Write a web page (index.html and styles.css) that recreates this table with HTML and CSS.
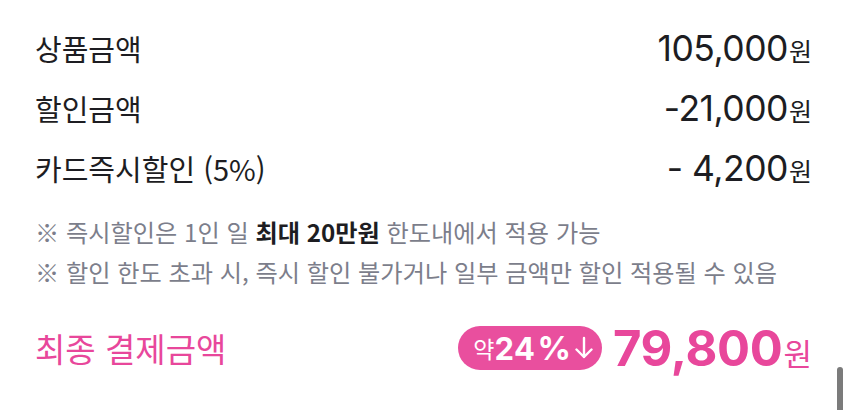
FILE: index.html
```html
<!DOCTYPE html>
<html lang="ko">
<head>
<meta charset="utf-8">
<link rel="stylesheet" href="styles.css">
</head>
<body>
<div class="summary">
  <div class="row">
    <span class="label">상품금액</span>
    <span class="amount"><span class="num">105,000</span><span class="won">원</span></span>
  </div>
  <div class="row">
    <span class="label">할인금액</span>
    <span class="amount"><span class="num">-21,000</span><span class="won">원</span></span>
  </div>
  <div class="row">
    <span class="label">카드즉시할인 (5%)</span>
    <span class="amount"><span class="num">- 4,200</span><span class="won">원</span></span>
  </div>
  <ul class="notes">
    <li>※ 즉시할인은 1인 일 <strong>최대 20만원</strong> 한도내에서 적용 가능</li>
    <li>※ 할인 한도 초과 시, 즉시 할인 불가거나 일부 금액만 할인 적용될 수 있음</li>
  </ul>
  <div class="total">
    <span class="total-label">최종 결제금액</span>
    <span class="total-right">
      <span class="badge"><span class="badge-pre">약</span><span class="badge-pct">24</span><span class="badge-sign">%</span><svg class="badge-arrow" width="18" height="24" viewBox="0 0 18 24"><path d="M9 2 V21 M1.5 13.5 L9 21 L16.5 13.5" fill="none" stroke="#ffffff" stroke-width="2.4" stroke-linecap="round" stroke-linejoin="round"/></svg></span>
      <span class="price"><span class="total-num">79,800</span><span class="total-won">원</span></span>
    </span>
  </div>
</div>
<div class="scrollbar"></div>
</body>
</html>
```
FILE: styles.css
```css
html, body {
  margin: 0;
  padding: 0;
  background: #ffffff;
}
body {
  font-family: "Noto Sans CJK KR", "Noto Sans", sans-serif;
  color: #1d1d22;
  width: 849px;
  height: 410px;
  overflow: hidden;
  position: relative;
}
.summary {
  padding: 18px 37px 0 35px;
  display: flex;
  flex-direction: column;
}
.row {
  display: flex;
  justify-content: space-between;
  align-items: center;
  height: 60px;
}
.label {
  font-size: 29px;
  letter-spacing: 0;
}
.amount {
  display: flex;
  align-items: baseline;
}
.num {
  font-family: "Inter", "Noto Sans", sans-serif;
  font-size: 35.5px;
  letter-spacing: -0.5px;
}
.won {
  font-size: 25px;
  margin-left: 1px;
}
.notes {
  list-style: none;
  margin: 14px 0 0 0;
  padding: 0;
  color: #7c7e8b;
  font-size: 24.2px;
  letter-spacing: 0;
}
.notes li {
  height: 40px;
  line-height: 40px;
  white-space: nowrap;
}
.notes strong {
  color: #1d1d22;
  font-weight: 700;
}
.total {
  display: flex;
  justify-content: space-between;
  align-items: center;
  margin-top: 28px;
  height: 56px;
}
.total-label {
  color: #e8479b;
  font-size: 33px;
  letter-spacing: 0;
}
.total-right {
  display: flex;
  align-items: center;
}
.badge {
  display: flex;
  align-items: center;
  background: #e94f9e;
  color: #ffffff;
  border-radius: 22px;
  height: 44px;
  padding: 0 9px 0 15px;
  margin-right: 11px;
}
.badge-pre {
  font-size: 23px;
}
.badge-pct {
  font-family: "Inter", "Noto Sans", sans-serif;
  font-weight: 700;
  font-size: 31px;
  letter-spacing: 0.5px;
}
.badge-sign {
  font-family: "Inter", "Noto Sans", sans-serif;
  font-weight: 700;
  font-size: 33px;
  margin-left: 2px;
  margin-right: 4px;
}
.badge-arrow {
  display: block;
}
.price {
  display: flex;
  align-items: baseline;
  color: #e8479b;
}
.total-num {
  font-family: "Inter", "Noto Sans", sans-serif;
  font-weight: 700;
  font-size: 49px;
  letter-spacing: -0.3px;
}
.total-won {
  font-size: 31px;
  margin-left: 1px;
}
.scrollbar {
  position: absolute;
  left: 837px;
  top: 367px;
  width: 6px;
  height: 50px;
  border-radius: 3px;
  background: #7b7b7b;
}
```
